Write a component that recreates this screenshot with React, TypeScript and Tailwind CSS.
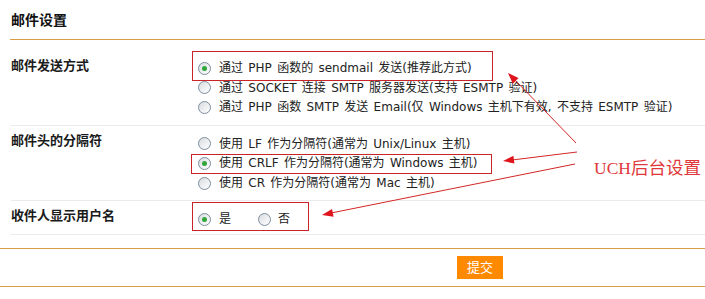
const font = "font-['DejaVu_Sans','Noto_Sans_CJK_SC',sans-serif]";

type RadioProps = { checked?: boolean };

const Radio = ({ checked }: RadioProps) => (
  <span className="flex h-[13px] w-[13px] shrink-0 items-center justify-center rounded-full border border-[#7f8d9e] bg-gradient-to-br from-[#d8dce0] to-white">
    {checked && <span className="h-[5px] w-[5px] rounded-full bg-[#2fa73a]" />}
  </span>
);

const Option = ({ checked, text, h = "h-[20px]" }: { checked?: boolean; text: string; h?: string }) => (
  <div className={`flex items-center ${h}`}>
    <Radio checked={checked} />
    <span className="ml-[8px] whitespace-nowrap [word-spacing:1.5px]">{text}</span>
  </div>
);

const Row = ({
  label,
  className,
  labelPad,
  children,
}: {
  label: string;
  className: string;
  labelPad: string;
  children: React.ReactNode;
}) => (
  <div className={`flex border-b border-[#ebebeb] ${className}`}>
    <div className={`w-[187px] shrink-0 text-[13px] font-bold leading-[20px] text-[#1a1a1a] ${labelPad}`}>{label}</div>
    <div className="flex flex-col">{children}</div>
  </div>
);

export default function App() {
  return (
    <div className={`relative h-[299px] w-[705px] overflow-hidden bg-white text-[12px] text-[#222] ${font}`}>
      <div className="ml-[10px] h-[40px] border-b border-[#d9a043] pl-[1px] pt-[10px] text-[14px] font-bold leading-[20px] text-[#111]">
        邮件设置
      </div>

      <div className="ml-[11px]">
        <Row label="邮件发送方式" className="h-[86px]" labelPad="pt-[16px]">
          <div className="pt-[18px]">
            <Option checked text="通过 PHP 函数的 sendmail 发送(推荐此方式)" />
            <Option text="通过 SOCKET 连接 SMTP 服务器发送(支持 ESMTP 验证)" h="h-[19px]" />
            <Option text="通过 PHP 函数 SMTP 发送 Email(仅 Windows 主机下有效, 不支持 ESMTP 验证)" />
          </div>
        </Row>
        <Row label="邮件头的分隔符" className="h-[75px]" labelPad="pt-[5px]">
          <div className="pt-[8px]">
            <Option text="使用 LF 作为分隔符(通常为 Unix/Linux 主机)" h="h-[19px]" />
            <Option checked text="使用 CRLF 作为分隔符(通常为 Windows 主机)" />
            <Option text="使用 CR 作为分隔符(通常为 Mac 主机)" />
          </div>
        </Row>
        <Row label="收件人显示用户名" className="h-[34px]" labelPad="pt-[5px]">
          <div className="flex h-[20px] items-center pt-[16px]">
            <Radio checked />
            <span className="ml-[8px]">是</span>
            <span className="ml-[27px]">
              <Radio />
            </span>
            <span className="ml-[7px]">否</span>
          </div>
        </Row>
      </div>

      <div className="mt-[13px] h-[39px] border-y border-[#d9a043] pl-[457px] pt-[7px]">
        <button className="h-[23px] w-[46px] bg-[#ff8a00] text-[13px] leading-[23px] text-white">提交</button>
      </div>

      {/* annotation overlay */}
      <div className="absolute left-[192px] top-[51px] h-[30px] w-[301px] border border-[#c8242a]" />
      <div className="absolute left-[191px] top-[154px] h-[20px] w-[301px] border border-[#c8242a]" />
      <div className="absolute left-[192px] top-[202px] h-[29px] w-[117px] border border-[#c8242a]" />

      <svg className="pointer-events-none absolute left-0 top-0" width="705" height="299" viewBox="0 0 705 299">
        <g stroke="#d42626" strokeWidth="1" fill="none">
          <line x1="576" y1="143" x2="514" y2="79" />
          <line x1="577" y1="152" x2="512" y2="160" />
          <line x1="575" y1="164" x2="331" y2="213" />
        </g>
        <g fill="#e0141c">
          <polygon points="508,73 518.5,78.1 512.8,83.7" />
          <polygon points="503,161 513.4,155.7 514.4,163.6" />
          <polygon points="322,215 332,208.9 333.6,216.7" />
        </g>
      </svg>

      <div className="absolute left-[594px] top-[156px] whitespace-nowrap font-['Liberation_Serif','Noto_Sans_CJK_SC',serif] text-[17.5px] leading-[24px] text-[#e0383a]">
        UCH后台设置
      </div>
    </div>
  );
}
